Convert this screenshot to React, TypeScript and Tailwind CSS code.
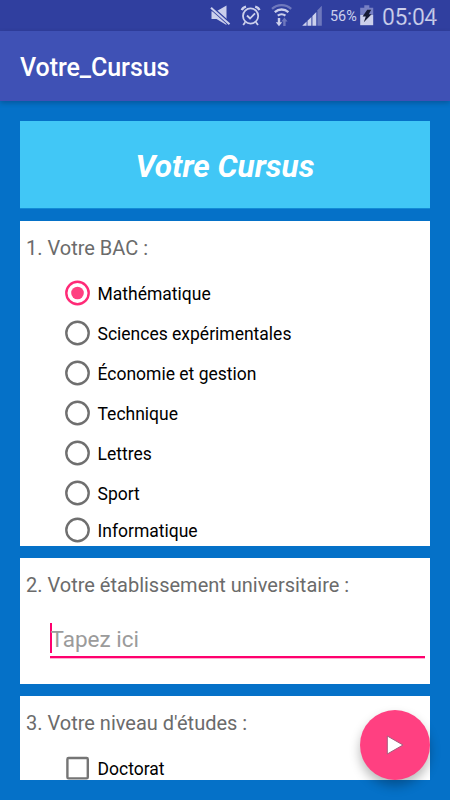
import type { ReactNode } from "react";
import clsx from "clsx";

const BAC_OPTIONS = [
  "Mathématique",
  "Sciences expérimentales",
  "Économie et gestion",
  "Technique",
  "Lettres",
  "Sport",
  "Informatique",
];

export default function App() {
  return (
    <div className="relative flex h-[800px] w-[450px] flex-col overflow-hidden bg-[#0571c8] font-[Roboto,sans-serif]">
      <StatusBar />

      <header className="z-10 flex h-[70px] shrink-0 items-center bg-[#3f51b5] px-5 pt-[3px] shadow-[0_2px_5px_rgba(0,0,0,0.22)]">
        <h1 className="text-[25px] font-medium leading-none tracking-[-0.05px] text-white">Votre_Cursus</h1>
      </header>

      <main className="flex h-[679px] flex-col gap-3 overflow-hidden px-5 pt-5">
        <div className="flex h-[88px] shrink-0 items-center justify-center border-b border-[#128bd6] bg-[#41c7f6] pt-[5px]">
          <h2 className="text-[31.5px] font-bold italic leading-none text-white">Votre Cursus</h2>
        </div>

        <Card title="1. Votre BAC :" className="h-[325px]">
          <div className="flex flex-col pl-[45px]">
            {BAC_OPTIONS.map((label, i) => (
              <label
                key={label}
                className={clsx(
                  "flex items-center gap-[7.5px]",
                  i === BAC_OPTIONS.length - 1 ? "h-[34px]" : "h-10"
                )}
              >
                <Radio checked={i === 0} />
                <span className="pt-[3px] text-[17.5px] leading-none text-black">{label}</span>
              </label>
            ))}
          </div>
        </Card>

        <Card title="2. Votre établissement universitaire :" className="h-[126px]">
          <div className="ml-[30px] mr-[5px] mt-[13px] flex h-[35px] items-start border-b-2 border-[#ff006e] shadow-[0_1px_0_#ffb0d0]">
            <span className="h-[30px] w-[2px] bg-[#ff006e]" />
            <span className="-ml-[1.5px] pt-[5px] text-[22.5px] leading-none text-[#9b9b9b]">Tapez ici</span>
          </div>
        </Card>

        <Card title="3. Votre niveau d'études :" className="h-[84px]">
          <label className="flex h-10 items-center gap-[7.5px] pl-[45px]">
            <svg width="25" height="26" viewBox="0 0 25 26" className="shrink-0">
              <rect x="2.4" y="3" width="20.4" height="20.4" rx="1.2" fill="none" stroke="#757575" strokeWidth="2.4" />
            </svg>
            <span className="pt-[3px] text-[17.5px] leading-none text-black">Doctorat</span>
          </label>
        </Card>
      </main>

      {/* floating next button */}
      <button className="absolute bottom-5 right-5 z-20 flex h-[70px] w-[70px] items-center justify-center rounded-full bg-[#ff4081] shadow-[0_6px_11px_rgba(0,0,0,0.28)]">
        <svg width="18" height="20" viewBox="0 0 18 20">
          <path d="M1.3 1 17 10 1.3 19Z" fill="#fff" stroke="#a75b7c" strokeWidth="1" />
        </svg>
      </button>
    </div>
  );
}

function Card({ title, className, children }: { title: string; className: string; children: ReactNode }) {
  return (
    <section className={clsx("shrink-0 overflow-hidden bg-white", className)}>
      <p className="h-[52px] pl-[6px] pt-[17px] text-[20px] leading-none text-[#6b6b6b]">{title}</p>
      {children}
    </section>
  );
}

function Radio({ checked }: { checked: boolean }) {
  return (
    <svg width="25" height="26" viewBox="0 0 25 26" className="shrink-0">
      <circle
        cx="12.5"
        cy="13"
        r="11.2"
        fill="none"
        stroke={checked ? "#ff2a77" : "#6f6f6f"}
        strokeWidth="2.4"
      />
      {checked ? <circle cx="12.5" cy="13" r="6.3" fill="#ff4081" /> : null}
    </svg>
  );
}

function StatusBar() {
  return (
    <div className="flex h-[31px] shrink-0 items-center bg-[#303f9f] pl-[210px] text-[#ccd0ec]">
      {/* muted speaker */}
      <svg width="22" height="31" viewBox="0 0 22 31" fill="currentColor">
        <path d="M1.5 11.3h5L16.5 5.5v19.5L6.5 19h-5Z" />
        <path d="M1 7.5 19.5 24" stroke="#303f9f" strokeWidth="4" />
        <path d="M1 7.8 19.5 24.2" stroke="currentColor" strokeWidth="2" />
      </svg>
      {/* alarm */}
      <svg className="ml-[8px]" width="22" height="31" viewBox="0 0 22 31" fill="none" stroke="currentColor" strokeWidth="1.8">
        <circle cx="10.6" cy="16" r="7.6" />
        <path d="m7 15.5 3 3 5-5.2M5.2 22.2l-2 2.8M16 22.2l2 2.8" />
        <path d="M1.8 10.2c.6-1.7 2.2-3 4.2-3.5M19.4 10.2c-.6-1.7-2.2-3-4.2-3.5" strokeWidth="2.4" />
      </svg>
      {/* wifi */}
      <svg className="ml-[9px]" width="22" height="31" viewBox="0 0 22 31" fill="none">
        <g stroke="currentColor" strokeWidth="2.3">
          <path d="M1 8.8c5.6-5 13.6-5 19.2 0" opacity=".4" />
          <path d="M3.8 12.2c4-3.6 9.6-3.6 13.6 0M6.8 15.7c2.2-1.9 5.4-1.9 7.6 0" />
        </g>
        <path d="M9.2 18v4.2h2L8 26.2l-3.2-4h2V18Z" fill="currentColor" />
        <path d="M14.6 26v-4.4h2l-3.2-4.1-3 4.1h1.8V26Z" fill="currentColor" opacity=".4" />
      </svg>
      {/* signal */}
      <svg className="ml-[9px]" width="22" height="31" viewBox="0 0 22 31" fill="currentColor">
        <path d="M.2 25.7 4.6 21.5v4.2ZM5.5 20.7l3.9-3.8v8.8H5.5ZM10.4 16l3.9-4v13.7h-3.9Z" />
        <path d="m15.4 10.3 4.4-4.6v20h-4.4Z" opacity=".4" />
      </svg>
      <span className="ml-[6px] w-[30px] pt-[3px] text-[14.4px] leading-none">56%</span>
      {/* charging battery */}
      <svg width="14" height="31" viewBox="0 0 14 31">
        <path d="M4.3 5.3h5v2.5h3.9v7H.2v-7h4.1Z" fill="#7780c4" />
        <path d="M.2 14.8h13v10.4H.2Z" fill="#ccd0ec" />
        <path d="M7.2 9.8h4L8.8 14.2h2.8L3.8 22.3l2-5.8H2.6Z" fill="#151a35" />
      </svg>
      <span className="ml-[8px] pt-[3px] text-[23px] leading-none tracking-[-0.5px] [-webkit-text-stroke:0.2px_#303f9f]">05:04</span>
    </div>
  );
}
